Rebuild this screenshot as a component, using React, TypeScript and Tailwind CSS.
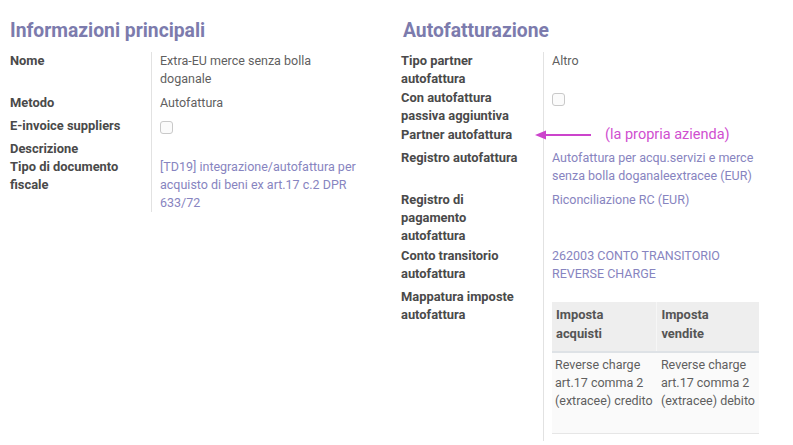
const font = { fontFamily: "Roboto, 'Noto Sans', sans-serif" };

type RowProps = {
  label: React.ReactNode;
  children?: React.ReactNode;
  pb?: string;
};

function Row({ label, children, pb = "" }: RowProps) {
  return (
    <>
      <div className={`text-[12.9px] font-bold text-[#4a4a4a] pr-2 ${pb}`}>{label}</div>
      <div className={`border-l border-[#e2e2e2] pl-[8px] text-[#5f5f5f] ${pb}`}>{children}</div>
    </>
  );
}

function Check() {
  return <div className="mt-[4px] h-[13px] w-[13px] rounded-[3px] border border-[#c9c9c9] bg-[#fbfbfb]" />;
}

function Link({ children }: { children: React.ReactNode }) {
  return <span className="text-[#8784c0]">{children}</span>;
}

export default function App() {
  return (
    <div style={font} className="flex h-[445px] w-[793px] overflow-hidden bg-white text-[12.5px] leading-[18px]">
      {/* Informazioni principali */}
      <div className="w-[393px] shrink-0 pl-[10px] pt-[19px]">
        <h2 className="text-[19.3px] font-bold leading-[24px] text-[#7c7bad]">Informazioni principali</h2>
        <div className="mt-[9px] grid grid-cols-[141px_232px]">
          <Row label="Nome" pb="pb-[6px]">
            Extra-EU merce senza bolla
            <br />
            doganale
          </Row>
          <Row label="Metodo" pb="pb-[5px]">
            Autofattura
          </Row>
          <Row label="E-invoice suppliers" pb="pb-[5px]">
            <Check />
          </Row>
          <Row label="Descrizione" />
          <Row
            label={
              <>
                Tipo di documento
                <br />
                fiscale
              </>
            }
          >
            <Link>
              [TD19] integrazione/autofattura per
              <br />
              acquisto di beni ex art.17 c.2 DPR
              <br />
              633/72
            </Link>
          </Row>
        </div>
      </div>

      {/* Autofatturazione */}
      <div className="flex-1 pl-[8px] pt-[19px]">
        <h2 className="pl-[2px] text-[19.3px] font-bold leading-[24px] text-[#7c7bad]">Autofatturazione</h2>
        <div className="mt-[9px] grid grid-cols-[142px_250px]">
          <Row
            label={
              <>
                Tipo partner
                <br />
                autofattura
              </>
            }
            pb="pb-[1px]"
          >
            Altro
          </Row>
          <Row
            label={
              <>
                Con autofattura
                <br />
                passiva aggiuntiva
              </>
            }
            pb="pb-[1px]"
          >
            <Check />
          </Row>
          <Row label="Partner autofattura" pb="pb-[5px]">
            <div className="flex h-[18px] items-center">
              <svg width="58" height="10" viewBox="0 0 58 10" className="-ml-[17px]">
                <line x1="8" y1="5" x2="56" y2="5" stroke="#cc44cc" strokeWidth="2" />
                <path d="M0 5 L11 0.5 L11 9.5 Z" fill="#cc44cc" />
              </svg>
              <span className="ml-[12px] text-[14.5px] text-[#d04fd0]">(la propria azienda)</span>
            </div>
          </Row>
          <Row label="Registro autofattura" pb="pb-[6px]">
            <Link>
              Autofattura per acqu.servizi e merce
              <br />
              senza bolla doganaleextracee (EUR)
            </Link>
          </Row>
          <Row
            label={
              <>
                Registro di
                <br />
                pagamento
                <br />
                autofattura
              </>
            }
            pb="pb-[2px]"
          >
            <Link>Riconciliazione RC (EUR)</Link>
          </Row>
          <Row
            label={
              <>
                Conto transitorio
                <br />
                autofattura
              </>
            }
            pb="pb-[5px]"
          >
            <Link>
              262003 CONTO TRANSITORIO
              <br />
              REVERSE CHARGE
            </Link>
          </Row>
          <Row
            label={
              <>
                Mappatura imposte
                <br />
                autofattura
              </>
            }
            pb="pb-[7px]"
          >
            <div className="pt-[14px]">
              <table className="w-[207px] border-collapse text-left">
                <thead>
                  <tr className="bg-[#eeeeee] border-b-2 border-[#dee2e6]">
                    <th className="w-[105px] border-r border-[#f6f6f6] px-[4px] pt-[3px] pb-[8px] align-top text-[12.9px] font-bold text-[#555555] leading-[19px]">
                      Imposta
                      <br />
                      acquisti
                    </th>
                    <th className="px-[4px] pt-[3px] pb-[8px] align-top text-[12.9px] font-bold text-[#555555] leading-[19px]">
                      Imposta
                      <br />
                      vendite
                    </th>
                  </tr>
                </thead>
                <tbody>
                  <tr className="h-[81px] bg-[#fafafa] border-b border-[#e6e6e6]">
                    <td className="whitespace-nowrap px-[3px] pt-[3px] align-top text-[#5f5f5f]">
                      Reverse charge
                      <br />
                      art.17 comma 2
                      <br />
                      (extracee) credito
                    </td>
                    <td className="whitespace-nowrap px-[4px] pt-[3px] align-top text-[#5f5f5f]">
                      Reverse charge
                      <br />
                      art.17 comma 2
                      <br />
                      (extracee) debito
                    </td>
                  </tr>
                </tbody>
              </table>
            </div>
          </Row>
        </div>
      </div>
    </div>
  );
}
